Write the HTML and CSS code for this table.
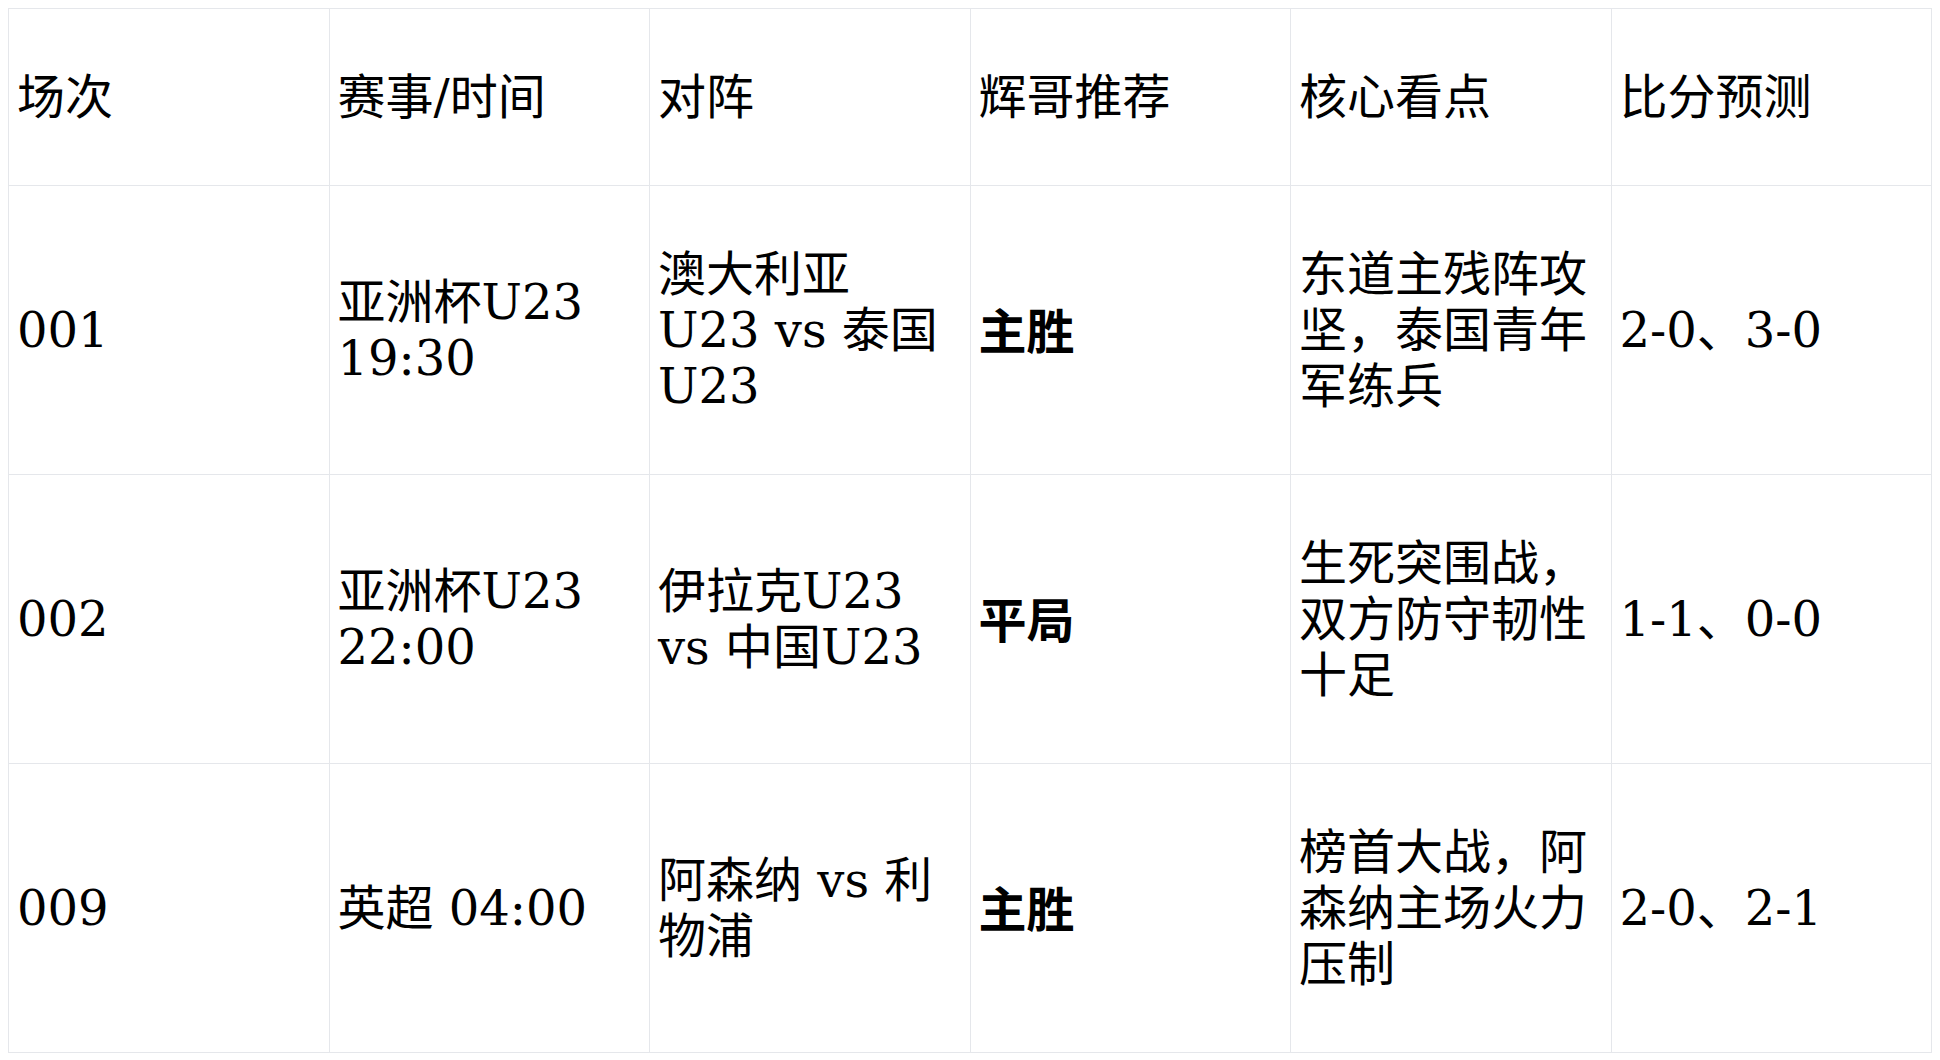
FILE: index.html
```html
<!DOCTYPE html>
<html lang="zh">
<head>
<meta charset="utf-8">
<title>赛事推荐</title>
<link rel="stylesheet" href="styles.css">
</head>
<body>
<table class="picks">
  <thead>
    <tr>
      <th>场次</th>
      <th>赛事/时间</th>
      <th>对阵</th>
      <th>辉哥推荐</th>
      <th>核心看点</th>
      <th>比分预测</th>
    </tr>
  </thead>
  <tbody>
    <tr>
      <td>001</td>
      <td>亚洲杯U23 19:30</td>
      <td>澳大利亚 U23 vs 泰国 U23</td>
      <td><strong>主胜</strong></td>
      <td>东道主残阵攻坚，泰国青年军练兵</td>
      <td>2-0、3-0</td>
    </tr>
    <tr>
      <td>002</td>
      <td>亚洲杯U23 22:00</td>
      <td>伊拉克U23 vs 中国U23</td>
      <td><strong>平局</strong></td>
      <td>生死突围战，双方防守韧性十足</td>
      <td>1-1、0-0</td>
    </tr>
    <tr>
      <td>009</td>
      <td>英超 04:00</td>
      <td>阿森纳 vs 利物浦</td>
      <td><strong>主胜</strong></td>
      <td>榜首大战，阿森纳主场火力压制</td>
      <td>2-0、2-1</td>
    </tr>
  </tbody>
</table>
</body>
</html>
```

FILE: styles.css
```css
html, body {
  background: #ffffff;
}

body {
  margin: 8px;
  font-family: "DejaVu Serif", "Noto Sans CJK SC", serif;
  font-size: 48px;
  color: #000000;
}

.picks {
  width: 100%;
  table-layout: fixed;
  border-collapse: collapse;
}

.picks th,
.picks td {
  border: 1px solid #e5e7eb;
  padding: 60px 8px;
  line-height: 56px;
  text-align: left;
  vertical-align: middle;
  font-weight: normal;
}

.picks strong {
  font-family: "Noto Sans CJK SC", sans-serif;
  font-weight: 700;
}
```
